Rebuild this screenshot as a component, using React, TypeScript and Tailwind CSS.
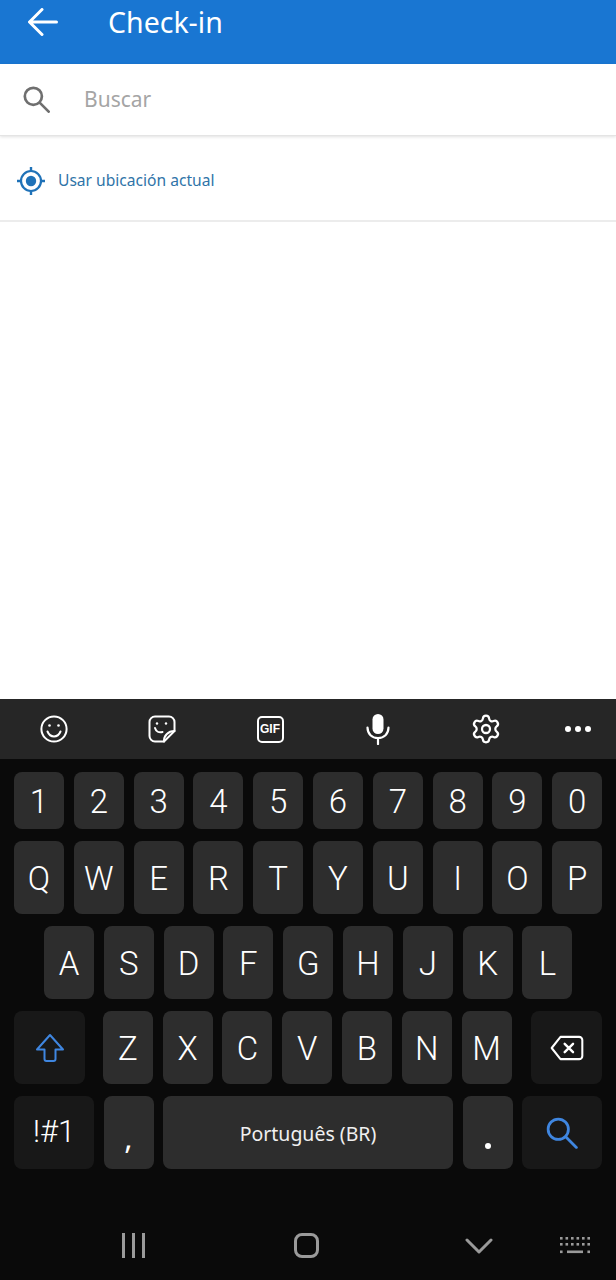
import type { ReactNode } from 'react';
import { Settings } from 'lucide-react';

const SANS = 'font-["Noto_Sans",sans-serif]';

const DIGITS = ['1', '2', '3', '4', '5', '6', '7', '8', '9', '0'];
const ROW_TOP = ['Q', 'W', 'E', 'R', 'T', 'Y', 'U', 'I', 'O', 'P'];
const ROW_MID = ['A', 'S', 'D', 'F', 'G', 'H', 'J', 'K', 'L'];
const ROW_LOW = ['Z', 'X', 'C', 'V', 'B', 'N', 'M'];

const Key = ({ label, className = 'h-[73px]' }: { label: string; className?: string }) => (
  <div
    className={`flex w-[50px] shrink-0 items-center justify-center rounded-[8px] bg-[#2d2d2d] pt-[1px] font-["Roboto",sans-serif] text-[33px] leading-none font-light text-white ${className}`}
  >
    {label}
  </div>
);

const BackArrow = () => (
  <svg width="30" height="28" viewBox="0 0 30 28" fill="none" stroke="white" strokeWidth="3" strokeLinecap="round" strokeLinejoin="round">
    <path d="M28.500 14H2M14 1.500 1.500 14 14 26.500" />
  </svg>
);

const LensIcon = ({ size, color, width }: { size: number; color: string; width: number }) => (
  <svg width={size} height={size} viewBox="0 0 30 30" fill="none" stroke={color} strokeWidth={width} strokeLinecap="round">
    <circle cx="11.500" cy="11.500" r="9.500" />
    <path d="m18.500 18.500 10 10" />
  </svg>
);

const SmileIcon = () => (
  <svg width="28" height="28" viewBox="0 0 28 28" fill="none" stroke="white" strokeWidth="2" strokeLinecap="round">
    <circle cx="14" cy="14" r="12.600" />
    <path d="M7.500 16.500c1.400 3.400 3.800 5 6.500 5s5.100-1.600 6.500-5" />
    <circle cx="9.500" cy="10.500" r="1.300" fill="white" stroke="none" />
    <circle cx="18.500" cy="10.500" r="1.300" fill="white" stroke="none" />
  </svg>
);

const StickerIcon = () => (
  <svg width="28" height="28" viewBox="0 0 28 28" fill="none" stroke="white" strokeWidth="2" strokeLinecap="round" strokeLinejoin="round">
    <path d="M16 26.500H7a5.500 5.500 0 0 1-5.500-5.500V7A5.500 5.500 0 0 1 7 1.500h14A5.500 5.500 0 0 1 26.500 7v9Z" />
    <path d="M16 26.500c-.5-5.500 4-10.500 10.500-10.500" />
    <path d="M7 13c1 3.500 4 5 7.500 4" />
    <circle cx="9" cy="8.500" r="1.200" fill="white" stroke="none" />
    <circle cx="18" cy="8.500" r="1.200" fill="white" stroke="none" />
  </svg>
);

const MicIcon = () => (
  <svg width="24" height="32" viewBox="0 0 24 32" fill="none" stroke="white" strokeWidth="2.200" strokeLinecap="round">
    <rect x="6.500" y="1" width="11" height="20" rx="5.500" fill="white" stroke="none" />
    <path d="M1.500 14.500c0 6.500 4.500 10.500 10.500 10.500s10.500-4 10.500-10.500" />
    <path d="M12 25v6" />
  </svg>
);

const ShiftIcon = () => (
  <svg width="30" height="30" viewBox="0 0 30 30" fill="none" stroke="#3f86e0" strokeWidth="2" strokeLinejoin="round">
    <path d="M15 2 2 16.500h7.500v9.500a2 2 0 0 0 2 2h7a2 2 0 0 0 2-2v-9.500H28Z" />
  </svg>
);

const BackspaceIcon = () => (
  <svg width="34" height="26" viewBox="0 0 36 28" fill="none" stroke="white" strokeWidth="2.200" strokeLinecap="round" strokeLinejoin="round">
    <path d="M11 2h20a3.500 3.500 0 0 1 3.500 3.500v17A3.500 3.500 0 0 1 31 26H11L1.500 14Z" />
    <path d="m15.500 9.500 9 9M24.500 9.500l-9 9" strokeWidth="2.600" />
  </svg>
);

const LocateIcon = () => (
  <svg width="28" height="28" viewBox="0 0 28 28" fill="none" stroke="#1f72b8" strokeWidth="2.200">
    <circle cx="14" cy="14" r="10" />
    <circle cx="14" cy="14" r="5.200" fill="#1f72b8" stroke="none" />
    <path d="M14 0v4M14 24v4M0 14h4M24 14h4" strokeWidth="2.400" />
  </svg>
);

const KeyboardHideIcon = () => (
  <svg width="30" height="17" viewBox="0 0 30 17" fill="#9a9a9a">
    {[0, 6].map((y) =>
      [0, 5.500, 11, 16.500, 22, 27.400].map((x) => <rect key={`${x}-${y}`} x={x} y={y} width="2.600" height="2.600" />)
    )}
    <rect x="0" y="13.500" width="2.600" height="2.600" />
    <rect x="7" y="13.500" width="16" height="2.600" />
    <rect x="27.400" y="13.500" width="2.600" height="2.600" />
  </svg>
);

const ToolbarCell = ({ children, className = 'w-[108px]' }: { children: ReactNode; className?: string }) => (
  <div className={`flex items-center justify-center ${className}`}>{children}</div>
);

export default function App() {
  return (
    <div className={`flex h-[1280px] w-[616px] flex-col overflow-hidden bg-white ${SANS}`}>
      <header className="flex h-[64px] shrink-0 items-start bg-[#1976d2] pl-[28px] text-white">
        <div className="mt-[8px]"><BackArrow /></div>
        <h1 className="mt-[3px] ml-[50px] text-[28.500px] leading-[38px] font-normal">Check-in</h1>
      </header>

      <div className="z-10 flex h-[72px] shrink-0 items-center border-b border-[#e4e4e4] bg-white pl-[23px] shadow-[0_1px_3px_rgba(0,0,0,0.12)]">
        <LensIcon size={27} color="#6f6f6f" width={3} />
        <span className="ml-[34px] text-[21px] text-[#a5a5a5]">Buscar</span>
      </div>

      <div className="flex h-[86px] shrink-0 items-center border-b-2 border-[#ececec] pt-[5px] pl-[17px]">
        <LocateIcon />
        <span className="ml-[13px] text-[15.600px] text-[#2f74a8]">Usar ubicación actual</span>
      </div>

      <div className="flex-1" />

      <div className="flex h-[581px] shrink-0 flex-col bg-[#0a0a0a]">
        <div className="flex h-[60px] shrink-0 items-center bg-[#262626]">
          <ToolbarCell><SmileIcon /></ToolbarCell>
          <ToolbarCell><StickerIcon /></ToolbarCell>
          <ToolbarCell>
            <div className="flex h-[27px] w-[27px] items-center justify-center rounded-[5px] border-2 border-white font-['Liberation_Sans',sans-serif] text-[12px] font-bold text-white">
              GIF
            </div>
          </ToolbarCell>
          <ToolbarCell><MicIcon /></ToolbarCell>
          <ToolbarCell><Settings size={32} strokeWidth={1.700} className="text-white" /></ToolbarCell>
          <ToolbarCell className="w-[76px]">
            <div className="flex gap-[4px]">
              <span className="h-[6px] w-[6px] rounded-full bg-white" />
              <span className="h-[6px] w-[6px] rounded-full bg-white" />
              <span className="h-[6px] w-[6px] rounded-full bg-white" />
            </div>
          </ToolbarCell>
        </div>

        <div className="mt-[13px] flex flex-col gap-[12px] pl-[14px]">
          <div className="flex gap-[9.800px]">
            {DIGITS.map((d) => (
              <Key key={d} label={d} className="h-[57px]" />
            ))}
          </div>
          <div className="flex gap-[9.800px]">
            {ROW_TOP.map((k) => (
              <Key key={k} label={k} />
            ))}
          </div>
          <div className="flex gap-[9.800px] pl-[30px]">
            {ROW_MID.map((k) => (
              <Key key={k} label={k} />
            ))}
          </div>
          <div className="flex gap-[9.800px]">
            <div className="mr-[8px] flex h-[73px] w-[71px] items-center justify-center rounded-[8px] bg-[#181818]">
              <ShiftIcon />
            </div>
            {ROW_LOW.map((k) => (
              <Key key={k} label={k} />
            ))}
            <div className="ml-[10px] flex h-[73px] w-[71px] items-center justify-center rounded-[8px] bg-[#181818]">
              <BackspaceIcon />
            </div>
          </div>
          <div className="flex gap-[9.500px]">
            <div className="flex h-[73px] w-[80px] items-center justify-center rounded-[8px] bg-[#181818] font-['Roboto',sans-serif] text-[31px] font-light text-white">
              !#1
            </div>
            <div className="flex h-[73px] w-[50px] items-end justify-center rounded-[8px] bg-[#2d2d2d] pb-[16px] text-[31px] leading-none text-white">
              ,
            </div>
            <div className="flex h-[73px] w-[290px] items-center justify-center rounded-[8px] bg-[#2d2d2d] pt-[2px] text-[19.500px] text-[#f0f0f0]">
              Português (BR)
            </div>
            <div className="flex h-[73px] w-[50px] items-end justify-center rounded-[8px] bg-[#2d2d2d] pb-[20px]">
              <span className="h-[6px] w-[6px] rounded-full bg-white" />
            </div>
            <div className="flex h-[73px] w-[80px] items-center justify-center rounded-[8px] bg-[#181818]">
              <LensIcon size={32} color="#3f86e0" width={2.600} />
            </div>
          </div>
        </div>

        <nav className="flex flex-1 items-center pt-[42px]">
          <div className="ml-[122px] flex gap-[7px]">
            <span className="h-[25px] w-[3px] bg-[#9a9a9a]" />
            <span className="h-[25px] w-[3px] bg-[#9a9a9a]" />
            <span className="h-[25px] w-[3px] bg-[#9a9a9a]" />
          </div>
          <span className="ml-[149px] h-[25px] w-[25px] rounded-[8px] border-[3px] border-[#9a9a9a]" />
          <svg className="ml-[146px]" width="28" height="18" viewBox="0 0 28 18" fill="none" stroke="#9a9a9a" strokeWidth="3" strokeLinecap="round" strokeLinejoin="round">
            <path d="M2 3l12 12L26 3" />
          </svg>
          <div className="ml-[67px]"><KeyboardHideIcon /></div>
        </nav>
      </div>
    </div>
  );
}
